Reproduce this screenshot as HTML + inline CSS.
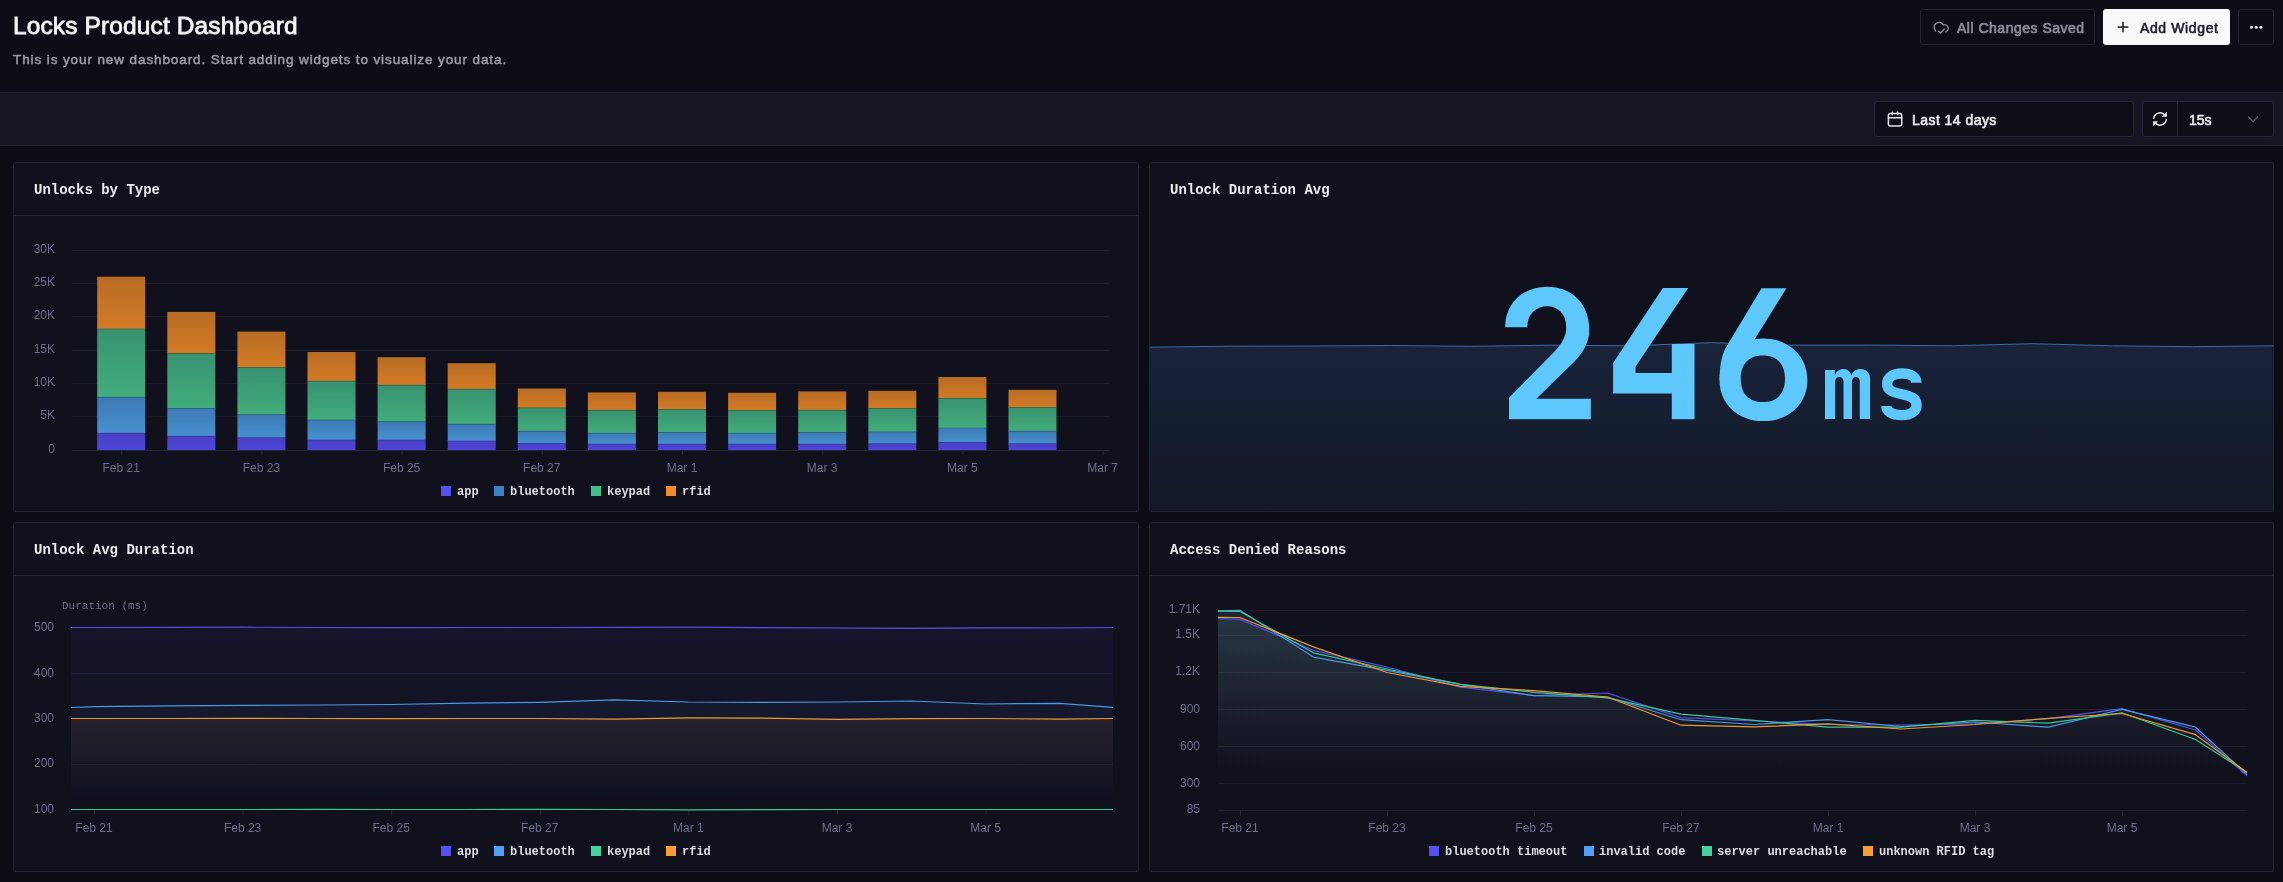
<!DOCTYPE html>
<html><head><meta charset="utf-8">
<style>
*{margin:0;padding:0;box-sizing:border-box}
html,body{width:2283px;height:882px;overflow:hidden;background:#0c0c15;font-family:"Liberation Sans",sans-serif}
.abs{position:absolute}
body>*{will-change:transform}
#hdr{left:0;top:0;width:2283px;height:92px;background:#0d0d17}
#tb{left:0;top:92px;width:2283px;height:54px;background:#161622;border-top:1px solid #20202f;border-bottom:1px solid #20202f}
h1{position:absolute;left:13px;top:12px;font-size:24.5px;font-weight:normal;color:#f4f4f6;white-space:nowrap;-webkit-text-stroke:0.8px #f4f4f6;letter-spacing:0.12px}
.sub{position:absolute;left:13px;top:52px;font-size:13.5px;font-weight:normal;color:#9d9da8;white-space:nowrap;letter-spacing:0.9px;-webkit-text-stroke:0.5px #9d9da8}
.btn{position:absolute;border:1px solid #22232f;border-radius:3px;background:#0d0d17}
.card{position:absolute;background:#11111d;border:1px solid #232337;border-radius:2px}
.ct{position:absolute;margin-top:2px;font-family:"Liberation Mono",monospace;font-weight:bold;font-size:14px;color:#ececf0;white-space:nowrap}
.hd{position:absolute;left:0;right:0;height:1px;background:#232337}
svg text{font-family:"Liberation Sans",sans-serif}
svg text.mono{font-family:"Liberation Mono",monospace}
svg text.b{font-weight:bold}
</style></head><body>
<div id="hdr" class="abs"></div>
<div id="tb" class="abs"></div>
<h1>Locks Product Dashboard</h1>
<div class="sub">This is your new dashboard. Start adding widgets to visualize your data.</div>

<!-- header buttons -->
<div class="btn" style="left:1920px;top:9px;width:175px;height:36px"></div>
<div class="abs" style="left:1957px;top:19.5px;font-size:14px;font-weight:normal;-webkit-text-stroke:0.65px #8e8e9a;letter-spacing:0.5px;color:#8e8e9a;white-space:nowrap">All Changes Saved</div>
<div class="abs" style="left:2103px;top:9px;width:127px;height:36px;background:#f8f9fb;border-radius:3px"></div>
<div class="abs" style="left:2140px;top:19.5px;font-size:14px;font-weight:normal;-webkit-text-stroke:0.6px #1e1f2b;letter-spacing:0.62px;color:#1e1f2b;white-space:nowrap">Add Widget</div>
<div class="btn" style="left:2238px;top:9px;width:36px;height:36px"></div>

<!-- toolbar controls -->
<div class="btn" style="left:1874px;top:101px;width:260px;height:36px;background:#0e0e18;border-color:#25263a"></div>
<div class="abs" style="left:1911.5px;top:111.5px;font-size:14px;font-weight:normal;-webkit-text-stroke:0.6px #e8e8ec;letter-spacing:0.45px;color:#e8e8ec;white-space:nowrap">Last 14 days</div>
<div class="btn" style="left:2142px;top:101px;width:132px;height:36px;background:#0e0e18;border-color:#25263a"></div>
<div class="abs" style="left:2177px;top:102px;width:1px;height:34px;background:#25263a"></div>
<div class="abs" style="left:2189px;top:111.5px;font-size:14px;font-weight:normal;-webkit-text-stroke:0.6px #e8e8ec;color:#e8e8ec;white-space:nowrap">15s</div>

<!-- cards -->
<div class="card" style="left:13px;top:162px;width:1126px;height:350px"><div class="hd" style="top:52px"></div></div>
<div class="card" style="left:1149px;top:162px;width:1125px;height:350px;overflow:hidden"></div>
<div class="card" style="left:13px;top:522px;width:1126px;height:350px"><div class="hd" style="top:52px"></div></div>
<div class="card" style="left:1149px;top:522px;width:1125px;height:350px"><div class="hd" style="top:52px"></div></div>

<div class="ct" style="left:34px;top:180px">Unlocks by Type</div>
<div class="ct" style="left:1170px;top:180px">Unlock Duration Avg</div>
<div class="ct" style="left:34px;top:540px">Unlock Avg Duration</div>
<div class="ct" style="left:1170px;top:540px">Access Denied Reasons</div>

<svg class="abs" style="left:0;top:0" width="2283" height="882" viewBox="0 0 2283 882" id="ov">
<g id="cardA">
<line x1="72" x2="1109" y1="450.5" y2="450.5" stroke="#262635" stroke-width="1"/>
<text x="55" y="453.0" text-anchor="end" font-size="12" fill="#6c6c8c">0</text>
<line x1="72" x2="1109" y1="416.5" y2="416.5" stroke="#1c1c2a" stroke-width="1"/>
<text x="55" y="419.0" text-anchor="end" font-size="12" fill="#6c6c8c">5K</text>
<line x1="72" x2="1109" y1="383.5" y2="383.5" stroke="#1c1c2a" stroke-width="1"/>
<text x="55" y="386.0" text-anchor="end" font-size="12" fill="#6c6c8c">10K</text>
<line x1="72" x2="1109" y1="350.5" y2="350.5" stroke="#1c1c2a" stroke-width="1"/>
<text x="55" y="353.0" text-anchor="end" font-size="12" fill="#6c6c8c">15K</text>
<line x1="72" x2="1109" y1="316.5" y2="316.5" stroke="#1c1c2a" stroke-width="1"/>
<text x="55" y="319.0" text-anchor="end" font-size="12" fill="#6c6c8c">20K</text>
<line x1="72" x2="1109" y1="283.5" y2="283.5" stroke="#1c1c2a" stroke-width="1"/>
<text x="55" y="286.0" text-anchor="end" font-size="12" fill="#6c6c8c">25K</text>
<line x1="72" x2="1109" y1="250.5" y2="250.5" stroke="#1c1c2a" stroke-width="1"/>
<text x="55" y="253.0" text-anchor="end" font-size="12" fill="#6c6c8c">30K</text>
<defs>
<linearGradient id="gO" x1="0" y1="0" x2="0" y2="1"><stop offset="0" stop-color="#b86c24"/><stop offset="1" stop-color="#d37b26"/></linearGradient>
<linearGradient id="gG" x1="0" y1="0" x2="0" y2="1"><stop offset="0" stop-color="#389270"/><stop offset="1" stop-color="#42ad7c"/></linearGradient>
<linearGradient id="gB" x1="0" y1="0" x2="0" y2="1"><stop offset="0" stop-color="#3d7ab5"/><stop offset="1" stop-color="#4690cf"/></linearGradient>
<linearGradient id="gP" x1="0" y1="0" x2="0" y2="1"><stop offset="0" stop-color="#4a40c6"/><stop offset="1" stop-color="#4c45d9"/></linearGradient>
</defs>
<rect x="97.2" y="276.7" width="48" height="52.3" fill="url(#gO)"/>
<rect x="97.2" y="329.0" width="48" height="68.3" fill="url(#gG)"/>
<rect x="97.2" y="397.3" width="48" height="35.9" fill="url(#gB)"/>
<rect x="97.2" y="433.2" width="48" height="16.8" fill="url(#gP)"/>
<line x1="97.2" x2="145.2" y1="329.0" y2="329.0" stroke="#2c6a4e" stroke-width="0.8" opacity="0.8"/>
<line x1="97.2" x2="145.2" y1="397.3" y2="397.3" stroke="#2f5f86" stroke-width="0.8" opacity="0.8"/>
<line x1="97.2" x2="145.2" y1="433.2" y2="433.2" stroke="#3a3aa0" stroke-width="0.8" opacity="0.8"/>
<rect x="167.3" y="311.9" width="48" height="41.7" fill="url(#gO)"/>
<rect x="167.3" y="353.6" width="48" height="54.9" fill="url(#gG)"/>
<rect x="167.3" y="408.5" width="48" height="27.7" fill="url(#gB)"/>
<rect x="167.3" y="436.2" width="48" height="13.8" fill="url(#gP)"/>
<line x1="167.3" x2="215.3" y1="353.6" y2="353.6" stroke="#2c6a4e" stroke-width="0.8" opacity="0.8"/>
<line x1="167.3" x2="215.3" y1="408.5" y2="408.5" stroke="#2f5f86" stroke-width="0.8" opacity="0.8"/>
<line x1="167.3" x2="215.3" y1="436.2" y2="436.2" stroke="#3a3aa0" stroke-width="0.8" opacity="0.8"/>
<rect x="237.4" y="331.6" width="48" height="35.8" fill="url(#gO)"/>
<rect x="237.4" y="367.4" width="48" height="47.4" fill="url(#gG)"/>
<rect x="237.4" y="414.8" width="48" height="23.0" fill="url(#gB)"/>
<rect x="237.4" y="437.8" width="48" height="12.2" fill="url(#gP)"/>
<line x1="237.4" x2="285.4" y1="367.4" y2="367.4" stroke="#2c6a4e" stroke-width="0.8" opacity="0.8"/>
<line x1="237.4" x2="285.4" y1="414.8" y2="414.8" stroke="#2f5f86" stroke-width="0.8" opacity="0.8"/>
<line x1="237.4" x2="285.4" y1="437.8" y2="437.8" stroke="#3a3aa0" stroke-width="0.8" opacity="0.8"/>
<rect x="307.5" y="352.0" width="48" height="29.2" fill="url(#gO)"/>
<rect x="307.5" y="381.2" width="48" height="38.8" fill="url(#gG)"/>
<rect x="307.5" y="420.0" width="48" height="20.0" fill="url(#gB)"/>
<rect x="307.5" y="440.0" width="48" height="10.0" fill="url(#gP)"/>
<line x1="307.5" x2="355.5" y1="381.2" y2="381.2" stroke="#2c6a4e" stroke-width="0.8" opacity="0.8"/>
<line x1="307.5" x2="355.5" y1="420.0" y2="420.0" stroke="#2f5f86" stroke-width="0.8" opacity="0.8"/>
<line x1="307.5" x2="355.5" y1="440.0" y2="440.0" stroke="#3a3aa0" stroke-width="0.8" opacity="0.8"/>
<rect x="377.6" y="357.2" width="48" height="28.0" fill="url(#gO)"/>
<rect x="377.6" y="385.2" width="48" height="36.5" fill="url(#gG)"/>
<rect x="377.6" y="421.7" width="48" height="18.3" fill="url(#gB)"/>
<rect x="377.6" y="440.0" width="48" height="10.0" fill="url(#gP)"/>
<line x1="377.6" x2="425.6" y1="385.2" y2="385.2" stroke="#2c6a4e" stroke-width="0.8" opacity="0.8"/>
<line x1="377.6" x2="425.6" y1="421.7" y2="421.7" stroke="#2f5f86" stroke-width="0.8" opacity="0.8"/>
<line x1="377.6" x2="425.6" y1="440.0" y2="440.0" stroke="#3a3aa0" stroke-width="0.8" opacity="0.8"/>
<rect x="447.7" y="363.2" width="48" height="26.0" fill="url(#gO)"/>
<rect x="447.7" y="389.2" width="48" height="35.1" fill="url(#gG)"/>
<rect x="447.7" y="424.3" width="48" height="16.7" fill="url(#gB)"/>
<rect x="447.7" y="441.0" width="48" height="9.0" fill="url(#gP)"/>
<line x1="447.7" x2="495.7" y1="389.2" y2="389.2" stroke="#2c6a4e" stroke-width="0.8" opacity="0.8"/>
<line x1="447.7" x2="495.7" y1="424.3" y2="424.3" stroke="#2f5f86" stroke-width="0.8" opacity="0.8"/>
<line x1="447.7" x2="495.7" y1="441.0" y2="441.0" stroke="#3a3aa0" stroke-width="0.8" opacity="0.8"/>
<rect x="517.8" y="388.5" width="48" height="19.4" fill="url(#gO)"/>
<rect x="517.8" y="407.9" width="48" height="23.3" fill="url(#gG)"/>
<rect x="517.8" y="431.2" width="48" height="12.2" fill="url(#gB)"/>
<rect x="517.8" y="443.4" width="48" height="6.6" fill="url(#gP)"/>
<line x1="517.8" x2="565.8" y1="407.9" y2="407.9" stroke="#2c6a4e" stroke-width="0.8" opacity="0.8"/>
<line x1="517.8" x2="565.8" y1="431.2" y2="431.2" stroke="#2f5f86" stroke-width="0.8" opacity="0.8"/>
<line x1="517.8" x2="565.8" y1="443.4" y2="443.4" stroke="#3a3aa0" stroke-width="0.8" opacity="0.8"/>
<rect x="587.9" y="392.4" width="48" height="17.8" fill="url(#gO)"/>
<rect x="587.9" y="410.2" width="48" height="23.0" fill="url(#gG)"/>
<rect x="587.9" y="433.2" width="48" height="10.8" fill="url(#gB)"/>
<rect x="587.9" y="444.0" width="48" height="6.0" fill="url(#gP)"/>
<line x1="587.9" x2="635.9" y1="410.2" y2="410.2" stroke="#2c6a4e" stroke-width="0.8" opacity="0.8"/>
<line x1="587.9" x2="635.9" y1="433.2" y2="433.2" stroke="#2f5f86" stroke-width="0.8" opacity="0.8"/>
<line x1="587.9" x2="635.9" y1="444.0" y2="444.0" stroke="#3a3aa0" stroke-width="0.8" opacity="0.8"/>
<rect x="658.0" y="391.8" width="48" height="17.7" fill="url(#gO)"/>
<rect x="658.0" y="409.5" width="48" height="23.0" fill="url(#gG)"/>
<rect x="658.0" y="432.5" width="48" height="11.5" fill="url(#gB)"/>
<rect x="658.0" y="444.0" width="48" height="6.0" fill="url(#gP)"/>
<line x1="658.0" x2="706.0" y1="409.5" y2="409.5" stroke="#2c6a4e" stroke-width="0.8" opacity="0.8"/>
<line x1="658.0" x2="706.0" y1="432.5" y2="432.5" stroke="#2f5f86" stroke-width="0.8" opacity="0.8"/>
<line x1="658.0" x2="706.0" y1="444.0" y2="444.0" stroke="#3a3aa0" stroke-width="0.8" opacity="0.8"/>
<rect x="728.1" y="392.8" width="48" height="17.7" fill="url(#gO)"/>
<rect x="728.1" y="410.5" width="48" height="22.7" fill="url(#gG)"/>
<rect x="728.1" y="433.2" width="48" height="10.8" fill="url(#gB)"/>
<rect x="728.1" y="444.0" width="48" height="6.0" fill="url(#gP)"/>
<line x1="728.1" x2="776.1" y1="410.5" y2="410.5" stroke="#2c6a4e" stroke-width="0.8" opacity="0.8"/>
<line x1="728.1" x2="776.1" y1="433.2" y2="433.2" stroke="#2f5f86" stroke-width="0.8" opacity="0.8"/>
<line x1="728.1" x2="776.1" y1="444.0" y2="444.0" stroke="#3a3aa0" stroke-width="0.8" opacity="0.8"/>
<rect x="798.2" y="391.4" width="48" height="18.8" fill="url(#gO)"/>
<rect x="798.2" y="410.2" width="48" height="22.3" fill="url(#gG)"/>
<rect x="798.2" y="432.5" width="48" height="11.5" fill="url(#gB)"/>
<rect x="798.2" y="444.0" width="48" height="6.0" fill="url(#gP)"/>
<line x1="798.2" x2="846.2" y1="410.2" y2="410.2" stroke="#2c6a4e" stroke-width="0.8" opacity="0.8"/>
<line x1="798.2" x2="846.2" y1="432.5" y2="432.5" stroke="#2f5f86" stroke-width="0.8" opacity="0.8"/>
<line x1="798.2" x2="846.2" y1="444.0" y2="444.0" stroke="#3a3aa0" stroke-width="0.8" opacity="0.8"/>
<rect x="868.3" y="390.8" width="48" height="17.7" fill="url(#gO)"/>
<rect x="868.3" y="408.5" width="48" height="23.4" fill="url(#gG)"/>
<rect x="868.3" y="431.9" width="48" height="11.9" fill="url(#gB)"/>
<rect x="868.3" y="443.8" width="48" height="6.2" fill="url(#gP)"/>
<line x1="868.3" x2="916.3" y1="408.5" y2="408.5" stroke="#2c6a4e" stroke-width="0.8" opacity="0.8"/>
<line x1="868.3" x2="916.3" y1="431.9" y2="431.9" stroke="#2f5f86" stroke-width="0.8" opacity="0.8"/>
<line x1="868.3" x2="916.3" y1="443.8" y2="443.8" stroke="#3a3aa0" stroke-width="0.8" opacity="0.8"/>
<rect x="938.4" y="377.0" width="48" height="21.3" fill="url(#gO)"/>
<rect x="938.4" y="398.3" width="48" height="29.7" fill="url(#gG)"/>
<rect x="938.4" y="428.0" width="48" height="14.4" fill="url(#gB)"/>
<rect x="938.4" y="442.4" width="48" height="7.6" fill="url(#gP)"/>
<line x1="938.4" x2="986.4" y1="398.3" y2="398.3" stroke="#2c6a4e" stroke-width="0.8" opacity="0.8"/>
<line x1="938.4" x2="986.4" y1="428.0" y2="428.0" stroke="#2f5f86" stroke-width="0.8" opacity="0.8"/>
<line x1="938.4" x2="986.4" y1="442.4" y2="442.4" stroke="#3a3aa0" stroke-width="0.8" opacity="0.8"/>
<rect x="1008.5" y="389.8" width="48" height="17.7" fill="url(#gO)"/>
<rect x="1008.5" y="407.5" width="48" height="23.7" fill="url(#gG)"/>
<rect x="1008.5" y="431.2" width="48" height="12.6" fill="url(#gB)"/>
<rect x="1008.5" y="443.8" width="48" height="6.2" fill="url(#gP)"/>
<line x1="1008.5" x2="1056.5" y1="407.5" y2="407.5" stroke="#2c6a4e" stroke-width="0.8" opacity="0.8"/>
<line x1="1008.5" x2="1056.5" y1="431.2" y2="431.2" stroke="#2f5f86" stroke-width="0.8" opacity="0.8"/>
<line x1="1008.5" x2="1056.5" y1="443.8" y2="443.8" stroke="#3a3aa0" stroke-width="0.8" opacity="0.8"/>
<line x1="121.7" x2="121.7" y1="451" y2="455" stroke="#262635"/>
<text x="121.2" y="472" text-anchor="middle" font-size="12" fill="#6c6c8c">Feb 21</text>
<line x1="261.9" x2="261.9" y1="451" y2="455" stroke="#262635"/>
<text x="261.4" y="472" text-anchor="middle" font-size="12" fill="#6c6c8c">Feb 23</text>
<line x1="402.1" x2="402.1" y1="451" y2="455" stroke="#262635"/>
<text x="401.6" y="472" text-anchor="middle" font-size="12" fill="#6c6c8c">Feb 25</text>
<line x1="542.3" x2="542.3" y1="451" y2="455" stroke="#262635"/>
<text x="541.8" y="472" text-anchor="middle" font-size="12" fill="#6c6c8c">Feb 27</text>
<line x1="682.5" x2="682.5" y1="451" y2="455" stroke="#262635"/>
<text x="682.0" y="472" text-anchor="middle" font-size="12" fill="#6c6c8c">Mar 1</text>
<line x1="822.7" x2="822.7" y1="451" y2="455" stroke="#262635"/>
<text x="822.2" y="472" text-anchor="middle" font-size="12" fill="#6c6c8c">Mar 3</text>
<line x1="962.9" x2="962.9" y1="451" y2="455" stroke="#262635"/>
<text x="962.4" y="472" text-anchor="middle" font-size="12" fill="#6c6c8c">Mar 5</text>
<line x1="1103.1" x2="1103.1" y1="451" y2="455" stroke="#262635"/>
<text x="1102.6" y="472" text-anchor="middle" font-size="12" fill="#6c6c8c">Mar 7</text>
</g>
<rect x="441" y="486" width="10" height="10" fill="#5550ee"/><text class="mono b" x="457" y="495" font-size="12" fill="#dedee4">app</text><rect x="494" y="486" width="10" height="10" fill="#3f82c2"/><text class="mono b" x="510" y="495" font-size="12" fill="#dedee4">bluetooth</text><rect x="591" y="486" width="10" height="10" fill="#44be8a"/><text class="mono b" x="607" y="495" font-size="12" fill="#dedee4">keypad</text><rect x="666" y="486" width="10" height="10" fill="#f48b2b"/><text class="mono b" x="682" y="495" font-size="12" fill="#dedee4">rfid</text>
<g id="cardC">
<line x1="71" x2="1113" y1="809.5" y2="809.5" stroke="#1c1c2a"/>
<text x="54" y="812.6999999999999" text-anchor="end" font-size="12" fill="#6c6c8c">100</text>
<line x1="71" x2="1113" y1="764.5" y2="764.5" stroke="#1c1c2a"/>
<text x="54" y="767.0999999999999" text-anchor="end" font-size="12" fill="#6c6c8c">200</text>
<line x1="71" x2="1113" y1="718.5" y2="718.5" stroke="#1c1c2a"/>
<text x="54" y="721.8" text-anchor="end" font-size="12" fill="#6c6c8c">300</text>
<line x1="71" x2="1113" y1="673.5" y2="673.5" stroke="#1c1c2a"/>
<text x="54" y="676.5" text-anchor="end" font-size="12" fill="#6c6c8c">400</text>
<line x1="71" x2="1113" y1="627.5" y2="627.5" stroke="#1c1c2a"/>
<text x="54" y="631.0999999999999" text-anchor="end" font-size="12" fill="#6c6c8c">500</text>
<text class="mono" x="62" y="609" font-size="11" fill="#6c6c8c">Duration (ms)</text>
</g>
<line x1="94.5" x2="94.5" y1="810" y2="815" stroke="#262635"/>
<text x="94.0" y="832" text-anchor="middle" font-size="12" fill="#6c6c8c">Feb 21</text>
<line x1="243.1" x2="243.1" y1="810" y2="815" stroke="#262635"/>
<text x="242.6" y="832" text-anchor="middle" font-size="12" fill="#6c6c8c">Feb 23</text>
<line x1="391.7" x2="391.7" y1="810" y2="815" stroke="#262635"/>
<text x="391.2" y="832" text-anchor="middle" font-size="12" fill="#6c6c8c">Feb 25</text>
<line x1="540.3" x2="540.3" y1="810" y2="815" stroke="#262635"/>
<text x="539.8" y="832" text-anchor="middle" font-size="12" fill="#6c6c8c">Feb 27</text>
<line x1="688.9" x2="688.9" y1="810" y2="815" stroke="#262635"/>
<text x="688.4" y="832" text-anchor="middle" font-size="12" fill="#6c6c8c">Mar 1</text>
<line x1="837.5" x2="837.5" y1="810" y2="815" stroke="#262635"/>
<text x="837.0" y="832" text-anchor="middle" font-size="12" fill="#6c6c8c">Mar 3</text>
<line x1="986.1" x2="986.1" y1="810" y2="815" stroke="#262635"/>
<text x="985.6" y="832" text-anchor="middle" font-size="12" fill="#6c6c8c">Mar 5</text>
<rect x="441" y="846" width="10" height="10" fill="#5550ee"/><text class="mono b" x="457" y="855" font-size="12" fill="#dedee4">app</text><rect x="494" y="846" width="10" height="10" fill="#52a0f8"/><text class="mono b" x="510" y="855" font-size="12" fill="#dedee4">bluetooth</text><rect x="591" y="846" width="10" height="10" fill="#44d2a0"/><text class="mono b" x="607" y="855" font-size="12" fill="#dedee4">keypad</text><rect x="666" y="846" width="10" height="10" fill="#f5a030"/><text class="mono b" x="682" y="855" font-size="12" fill="#dedee4">rfid</text>
<line x1="1218" x2="2247" y1="810.5" y2="810.5" stroke="#1c1c2a"/>
<text x="1200" y="812.5" text-anchor="end" font-size="12" fill="#6c6c8c">85</text>
<line x1="1218" x2="2247" y1="783.5" y2="783.5" stroke="#1c1c2a"/>
<text x="1200" y="787.0999999999999" text-anchor="end" font-size="12" fill="#6c6c8c">300</text>
<line x1="1218" x2="2247" y1="746.5" y2="746.5" stroke="#1c1c2a"/>
<text x="1200" y="749.6999999999999" text-anchor="end" font-size="12" fill="#6c6c8c">600</text>
<line x1="1218" x2="2247" y1="709.5" y2="709.5" stroke="#1c1c2a"/>
<text x="1200" y="712.8" text-anchor="end" font-size="12" fill="#6c6c8c">900</text>
<line x1="1218" x2="2247" y1="672.5" y2="672.5" stroke="#1c1c2a"/>
<text x="1200" y="675.3" text-anchor="end" font-size="12" fill="#6c6c8c">1.2K</text>
<line x1="1218" x2="2247" y1="635.5" y2="635.5" stroke="#1c1c2a"/>
<text x="1200" y="638.0" text-anchor="end" font-size="12" fill="#6c6c8c">1.5K</text>
<line x1="1218" x2="2247" y1="610.5" y2="610.5" stroke="#1c1c2a"/>
<text x="1200" y="613.0" text-anchor="end" font-size="12" fill="#6c6c8c">1.71K</text>
<line x1="1240.5" x2="1240.5" y1="811" y2="816" stroke="#262635"/>
<text x="1240.0" y="832" text-anchor="middle" font-size="12" fill="#6c6c8c">Feb 21</text>
<line x1="1387.5" x2="1387.5" y1="811" y2="816" stroke="#262635"/>
<text x="1387.0" y="832" text-anchor="middle" font-size="12" fill="#6c6c8c">Feb 23</text>
<line x1="1534.5" x2="1534.5" y1="811" y2="816" stroke="#262635"/>
<text x="1534.0" y="832" text-anchor="middle" font-size="12" fill="#6c6c8c">Feb 25</text>
<line x1="1681.5" x2="1681.5" y1="811" y2="816" stroke="#262635"/>
<text x="1681.0" y="832" text-anchor="middle" font-size="12" fill="#6c6c8c">Feb 27</text>
<line x1="1828.5" x2="1828.5" y1="811" y2="816" stroke="#262635"/>
<text x="1828.0" y="832" text-anchor="middle" font-size="12" fill="#6c6c8c">Mar 1</text>
<line x1="1975.5" x2="1975.5" y1="811" y2="816" stroke="#262635"/>
<text x="1975.0" y="832" text-anchor="middle" font-size="12" fill="#6c6c8c">Mar 3</text>
<line x1="2122.5" x2="2122.5" y1="811" y2="816" stroke="#262635"/>
<text x="2122.0" y="832" text-anchor="middle" font-size="12" fill="#6c6c8c">Mar 5</text>
<rect x="1429" y="846" width="10" height="10" fill="#5550ee"/><text class="mono b" x="1445" y="855" font-size="12" fill="#dedee4">bluetooth timeout</text><rect x="1584" y="846" width="10" height="10" fill="#52a0f8"/><text class="mono b" x="1599" y="855" font-size="12" fill="#dedee4">invalid code</text><rect x="1702" y="846" width="10" height="10" fill="#44d2a0"/><text class="mono b" x="1717" y="855" font-size="12" fill="#dedee4">server unreachable</text><rect x="1863" y="846" width="10" height="10" fill="#f5a030"/><text class="mono b" x="1879" y="855" font-size="12" fill="#dedee4">unknown RFID tag</text>
<defs>
<linearGradient id="aP" x1="0" y1="627" x2="0" y2="809" gradientUnits="userSpaceOnUse"><stop offset="0" stop-color="#4840c8" stop-opacity="0.085"/><stop offset="1" stop-color="#5048d8" stop-opacity="0.0"/></linearGradient>
<linearGradient id="aB" x1="0" y1="705" x2="0" y2="809" gradientUnits="userSpaceOnUse"><stop offset="0" stop-color="#4a9be8" stop-opacity="0.05"/><stop offset="1" stop-color="#4a9be8" stop-opacity="0"/></linearGradient>
<linearGradient id="aO" x1="0" y1="718" x2="0" y2="790" gradientUnits="userSpaceOnUse"><stop offset="0" stop-color="#f0a030" stop-opacity="0.075"/><stop offset="1" stop-color="#f0a030" stop-opacity="0"/></linearGradient>
<linearGradient id="aD" x1="0" y1="610" x2="0" y2="775" gradientUnits="userSpaceOnUse"><stop offset="0" stop-color="#88d0e8" stop-opacity="0.056"/><stop offset="1" stop-color="#8fa8c0" stop-opacity="0"/></linearGradient>
</defs>
<path d="M71.0,627.5 L94.0,627.5 L168.3,627.4 L242.6,627.2 L316.9,627.5 L391.2,627.6 L465.5,627.5 L539.8,627.5 L614.1,627.4 L688.4,627.2 L762.7,627.7 L837.0,628.0 L911.3,628.3 L985.6,627.9 L1059.9,628.0 L1113.0,627.5 L1113.0,809 L71.0,809 Z" fill="url(#aP)"/>
<path d="M71.0,707.5 L94.0,706.6 L168.3,705.8 L242.6,705.4 L316.9,705.0 L391.2,704.5 L465.5,703.2 L539.8,702.3 L614.1,699.9 L688.4,702.0 L762.7,702.3 L837.0,702.0 L911.3,701.0 L985.6,704.0 L1059.9,703.3 L1113.0,707.4 L1113.0,809 L71.0,809 Z" fill="url(#aB)"/>
<path d="M71.0,718.5 L94.0,718.5 L168.3,718.5 L242.6,718.4 L316.9,718.5 L391.2,718.6 L465.5,718.5 L539.8,718.5 L614.1,719.2 L688.4,717.9 L762.7,718.2 L837.0,719.4 L911.3,718.7 L985.6,718.5 L1059.9,719.1 L1113.0,718.5 L1113.0,790 L71.0,790 Z" fill="url(#aO)"/>
<polyline points="71.0,627.5 94.0,627.5 168.3,627.4 242.6,627.2 316.9,627.5 391.2,627.6 465.5,627.5 539.8,627.5 614.1,627.4 688.4,627.2 762.7,627.7 837.0,628.0 911.3,628.3 985.6,627.9 1059.9,628.0 1113.0,627.5" fill="none" stroke="#5550e8" stroke-width="1.2" stroke-linejoin="round"/>
<polyline points="71.0,707.5 94.0,706.6 168.3,705.8 242.6,705.4 316.9,705.0 391.2,704.5 465.5,703.2 539.8,702.3 614.1,699.9 688.4,702.0 762.7,702.3 837.0,702.0 911.3,701.0 985.6,704.0 1059.9,703.3 1113.0,707.4" fill="none" stroke="#4a98e0" stroke-width="1.2" stroke-linejoin="round"/>
<polyline points="71.0,718.5 94.0,718.5 168.3,718.5 242.6,718.4 316.9,718.5 391.2,718.6 465.5,718.5 539.8,718.5 614.1,719.2 688.4,717.9 762.7,718.2 837.0,719.4 911.3,718.7 985.6,718.5 1059.9,719.1 1113.0,718.5" fill="none" stroke="#e89a2e" stroke-width="1.2" stroke-linejoin="round"/>
<polyline points="71.0,809.5 94.0,809.5 168.3,809.5 242.6,809.5 316.9,809.4 391.2,809.5 465.5,809.5 539.8,809.3 614.1,809.5 688.4,809.9 762.7,809.7 837.0,809.5 911.3,809.5 985.6,809.5 1059.9,809.5 1113.0,809.5" fill="none" stroke="#3cc894" stroke-width="1.2" stroke-linejoin="round"/>
<path d="M1218.0,618.5 L1240.0,619.4 L1313.5,650.3 L1387.0,667.0 L1460.5,687.2 L1534.0,695.6 L1607.5,693.0 L1681.0,717.6 L1754.5,721.0 L1828.0,724.5 L1901.5,725.0 L1975.0,723.8 L2048.5,718.7 L2122.0,708.7 L2195.5,730.0 L2247.0,775.8 L2247.0,810 L1218.0,810 Z" fill="url(#aD)"/>
<path d="M1218.0,610.8 L1240.0,610.3 L1313.5,657.1 L1387.0,670.3 L1460.5,684.3 L1534.0,695.6 L1607.5,697.0 L1681.0,719.7 L1754.5,724.5 L1828.0,719.7 L1901.5,726.5 L1975.0,722.0 L2048.5,727.2 L2122.0,709.4 L2195.5,727.2 L2247.0,774.5 L2247.0,810 L1218.0,810 Z" fill="url(#aD)"/>
<path d="M1218.0,611.2 L1240.0,611.4 L1313.5,652.8 L1387.0,669.0 L1460.5,684.3 L1534.0,692.3 L1607.5,697.8 L1681.0,714.2 L1754.5,720.4 L1828.0,727.2 L1901.5,727.2 L1975.0,720.4 L2048.5,723.1 L2122.0,712.8 L2195.5,739.5 L2247.0,772.4 L2247.0,810 L1218.0,810 Z" fill="url(#aD)"/>
<path d="M1218.0,617.4 L1240.0,617.5 L1313.5,646.9 L1387.0,672.5 L1460.5,686.4 L1534.0,690.6 L1607.5,697.0 L1681.0,725.2 L1754.5,726.9 L1828.0,723.8 L1901.5,729.0 L1975.0,724.5 L2048.5,718.3 L2122.0,713.5 L2195.5,734.7 L2247.0,772.4 L2247.0,810 L1218.0,810 Z" fill="url(#aD)"/>
<polyline points="1218.0,618.5 1240.0,619.4 1313.5,650.3 1387.0,667.0 1460.5,687.2 1534.0,695.6 1607.5,693.0 1681.0,717.6 1754.5,721.0 1828.0,724.5 1901.5,725.0 1975.0,723.8 2048.5,718.7 2122.0,708.7 2195.5,730.0 2247.0,775.8" fill="none" stroke="#5550e8" stroke-width="1.2" stroke-linejoin="round"/>
<polyline points="1218.0,610.8 1240.0,610.3 1313.5,657.1 1387.0,670.3 1460.5,684.3 1534.0,695.6 1607.5,697.0 1681.0,719.7 1754.5,724.5 1828.0,719.7 1901.5,726.5 1975.0,722.0 2048.5,727.2 2122.0,709.4 2195.5,727.2 2247.0,774.5" fill="none" stroke="#4a98e0" stroke-width="1.2" stroke-linejoin="round"/>
<polyline points="1218.0,611.2 1240.0,611.4 1313.5,652.8 1387.0,669.0 1460.5,684.3 1534.0,692.3 1607.5,697.8 1681.0,714.2 1754.5,720.4 1828.0,727.2 1901.5,727.2 1975.0,720.4 2048.5,723.1 2122.0,712.8 2195.5,739.5 2247.0,772.4" fill="none" stroke="#3cc894" stroke-width="1.2" stroke-linejoin="round"/>
<polyline points="1218.0,617.4 1240.0,617.5 1313.5,646.9 1387.0,672.5 1460.5,686.4 1534.0,690.6 1607.5,697.0 1681.0,725.2 1754.5,726.9 1828.0,723.8 1901.5,729.0 1975.0,724.5 2048.5,718.3 2122.0,713.5 2195.5,734.7 2247.0,772.4" fill="none" stroke="#e89a2e" stroke-width="1.2" stroke-linejoin="round"/>
<defs><linearGradient id="spf" x1="0" y1="343" x2="0" y2="511" gradientUnits="userSpaceOnUse"><stop offset="0" stop-color="#19233a"/><stop offset="1" stop-color="#131828"/></linearGradient></defs>
<path d="M1150.0,347.2 L1230.2,346.2 L1310.4,346.0 L1390.6,345.5 L1470.8,346.3 L1551.0,345.2 L1631.2,345.8 L1711.4,342.7 L1791.6,345.1 L1871.8,345.1 L1952.0,345.8 L2032.2,343.7 L2112.4,345.8 L2192.6,346.7 L2272.8,345.8 L2272.8,511 L1150.0,511 Z" fill="url(#spf)"/>
<polyline points="1150.0,347.2 1230.2,346.2 1310.4,346.0 1390.6,345.5 1470.8,346.3 1551.0,345.2 1631.2,345.8 1711.4,342.7 1791.6,345.1 1871.8,345.1 1952.0,345.8 2032.2,343.7 2112.4,345.8 2192.6,346.7 2272.8,345.8" fill="none" stroke="#3c6aaa" stroke-width="1.0"/>
<g fill="#5ec8fc">
<path d="M1505.2,327.3 C1505.2,302 1524,286.7 1547.3,286.7 C1571,286.7 1589.3,303 1589.3,329.4 C1589.3,343 1583,352 1575,361 L1536.4,398.8 L1590.8,398.8 L1590.8,419.2 L1509,419.2 L1509,397.7 L1556,350 C1562,343 1566.2,337 1566.2,327.3 C1566.2,314 1558,306.3 1547.3,306.3 C1536,306.3 1527.3,314 1527.3,327.3 Z"/>
<path d="M1662.9,288 L1688.2,288 L1635.5,366.8 L1635.5,373 L1671.8,373 L1671.8,344 L1694.5,344 L1694.5,419.2 L1671.8,419.2 L1671.8,393.5 L1613.1,393.5 L1613.1,363 Z"/>
<path fill-rule="evenodd" d="M1719.5,379.9 C1719.5,355.9 1738.0,338.6 1763.5,338.6 C1788.9,338.6 1807.4,355.9 1807.4,379.9 C1807.4,403.8 1788.9,421.1 1763.5,421.1 C1738.0,421.1 1719.5,403.8 1719.5,379.9 Z M1740.8,378.8 C1740.8,393.7 1748.8,402.1 1762.9,402.1 C1777.0,402.1 1785.0,393.7 1785.0,378.8 C1785.0,363.9 1777.0,355.5 1762.9,355.5 C1748.8,355.5 1740.8,363.9 1740.8,378.8 Z"/>
<path d="M1761.5,288.2 L1786.4,288.2 L1748.4,349.5 L1730,368 L1719.6,380 C1719.6,368 1721,358 1725,349 Z"/>
<path d="M1825,419 L1825,370 L1834.8,370 L1834.8,375.6 C1836,371.5 1839.5,369 1843.8,369 C1848,369 1850.5,372 1851.3,375.6 C1852.5,371.5 1856,369 1860.5,369 C1866.5,369 1870.1,373 1870.1,379 L1870.1,419 L1859.8,419 L1859.8,381.3 C1859.8,378.8 1858.2,377.1 1855.9,377.1 C1853.6,377.1 1852,378.8 1852,381.3 L1852,419 L1843.5,419 L1843.5,381.3 C1843.5,378.8 1841.7,377.1 1839.3,377.1 C1836.9,377.1 1835.1,378.8 1835.1,381.3 L1835.1,419 Z"/>
</g>
<path d="M1916.4,382.7 C1916.4,376.5 1910,373.5 1902.1,373.5 C1893,373.5 1887.1,377.5 1887.1,384 C1887.1,390.5 1893,392.3 1902,394.3 C1911,396.3 1916.6,398.5 1916.6,405 C1916.6,411.5 1910.5,415.2 1901.6,415.2 C1892,415.2 1886.3,411.5 1886.3,405.9" fill="none" stroke="#5ec8fc" stroke-width="10.3"/>

<g fill="none" stroke="#8e8e9a" stroke-width="1.4" stroke-linecap="round" stroke-linejoin="round">
<path d="M1935.6,30.9 A5,5 0 1 1 1943.5,24.9 A3.2,3.2 0 0 1 1945.7,31.8"/>
<path d="M1938.6,31.2 L1940.6,33 L1944.4,29"/>
</g>
<g stroke="#22232e" stroke-width="1.6"><line x1="2117.7" x2="2128.4" y1="27.1" y2="27.1"/><line x1="2123" x2="2123" y1="21.9" y2="32.3"/></g>
<g fill="#f0f0f4"><circle cx="2251.5" cy="27.2" r="1.5"/><circle cx="2256.2" cy="27.2" r="1.5"/><circle cx="2260.9" cy="27.2" r="1.5"/></g>
<g fill="none" stroke="#e6e6ea" stroke-width="1.5" stroke-linecap="round">
<rect x="1888.4" y="113.4" width="13.3" height="12.7" rx="2"/>
<line x1="1888.4" x2="1901.7" y1="117.7" y2="117.7"/>
<line x1="1892.3" x2="1892.3" y1="112.2" y2="114.8"/><line x1="1897.6" x2="1897.6" y1="112.2" y2="114.8"/>
</g>
<g fill="none" stroke="#e8e8ec" stroke-width="1.5">
<path d="M2153.6,119 A6.4,6.4 0 0 1 2164.3,114.6"/>
<path d="M2166.4,119 A6.4,6.4 0 0 1 2155.7,123.4"/>
</g>
<g fill="#e8e8ec"><path d="M2166.9,111.8 L2166.9,116.8 L2161.9,116.8 Z"/><path d="M2153.1,121.2 L2158.1,121.2 L2153.1,126.2 Z"/></g>
<path d="M2248.2,116.6 L2253.1,121.6 L2258,116.6" fill="none" stroke="#6a6a78" stroke-width="1.2"/>

</svg>
</body></html>
